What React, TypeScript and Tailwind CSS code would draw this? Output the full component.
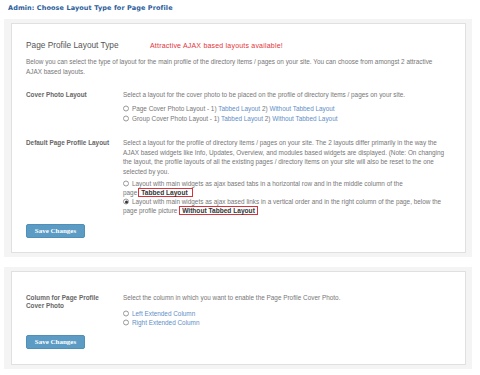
import React from "react";

const body = "font-['Liberation_Sans',Arial,sans-serif]";

function Radio({ checked }: { checked?: boolean }) {
  return (
    <span className="inline-flex align-middle w-[6px] h-[6px] rounded-full border border-[#9a9a9a] bg-white items-center justify-center mr-[3px] shrink-0 -translate-y-[0.5px]">
      {checked ? <span className="w-[3px] h-[3px] rounded-full bg-[#333]" /> : null}
    </span>
  );
}

function Button() {
  return (
    <div className="w-[59px] h-[14px] rounded-[2px] bg-[#5b9bc4] border border-[#4f8fb8] flex items-center justify-center text-white text-[7px] font-bold font-['Liberation_Serif',serif]">
      Save Changes
    </div>
  );
}

const link = "text-[#5f8fc7]";

export default function App() {
  return (
    <div className={`w-[480px] h-[375px] bg-white ${body} text-[#777] text-[6.4px] leading-[10px] pt-[4px] overflow-hidden`}>
      <div className="pl-[8px] text-[#2b5d9b] font-bold text-[6.5px] leading-[9px] font-['DejaVu_Sans',sans-serif] tracking-[0.1px]">
        Admin: Choose Layout Type for Page Profile
      </div>

      <div className="mt-[6px] ml-[4px] w-[468px] bg-[#f4f4f4] pt-[4px] pl-[7px] pr-[6px] pb-[4px]">
        <div className="bg-white border border-[#e0e0e0] pl-[14px] pr-[17px] pt-[15px] pb-[14px]">
          <div className="flex items-baseline">
            <div className="text-[#555] text-[8.3px] leading-[12px] w-[124px]">Page Profile Layout Type</div>
            <div className="text-[#e3343b] text-[7px] tracking-[0.2px]">Attractive AJAX based layouts available!</div>
          </div>
          <div className="mt-[6px] pr-[8px]">
            Below you can select the type of layout for the main profile of the directory items / pages on your site. You can choose from amongst 2 attractive AJAX based layouts.
          </div>

          <div className="mt-[13px] flex">
            <div className="w-[97px] shrink-0 font-bold text-[#666]">Cover Photo Layout</div>
            <div className="flex-1">
              <div>Select a layout for the cover photo to be placed on the profile of directory items / pages on your site.</div>
              <div className="mt-[4px]">
                <Radio />
                Page Cover Photo Layout - 1) <span className={link}>Tabbed Layout</span> 2) <span className={link}>Without Tabbed Layout</span>
              </div>
              <div>
                <Radio />
                Group Cover Photo Layout - 1) <span className={link}>Tabbed Layout</span> 2) <span className={link}>Without Tabbed Layout</span>
              </div>
            </div>
          </div>

          <div className="mt-[14px] flex">
            <div className="w-[97px] shrink-0 font-bold text-[#666] leading-[9.5px]">Default Page Profile Layout</div>
            <div className="flex-1">
              <div className="leading-[9.5px]">
                Select a layout for the profile of directory items / pages on your site. The 2 layouts differ primarily in the way the AJAX based widgets like Info, Updates, Overview, and modules based widgets are displayed. (Note: On changing the layout, the profile layouts of all the existing pages / directory items on your site will also be reset to the one selected by you.
              </div>
              <div className="mt-[4px] leading-[8.5px]">
                <Radio />
                Layout with main widgets as ajax based tabs in a horizontal row and in the middle column of the{" "}
                <span className="whitespace-nowrap">
                  page
                  <span className="ml-[1px] border border-[#d9323a] pl-[2px] pr-[4px] text-[#333] font-bold text-[6.6px]">Tabbed Layout</span>
                </span>
              </div>
              <div className="mt-[1px] leading-[8.5px]">
                <Radio checked />
                Layout with main widgets as ajax based links in a vertical order and in the right column of the page, below the page profile picture{" "}
                <span className="border border-[#d9323a] px-[2px] text-[#333] font-bold text-[6.6px]">Without Tabbed Layout</span>
              </div>
            </div>
          </div>

          <div className="mt-[9px]">
            <Button />
          </div>
        </div>
      </div>

      <div className="mt-[10px] ml-[4px] w-[468px] bg-[#f4f4f4] pt-[4px] pl-[7px] pr-[6px] pb-[4px]">
        <div className="bg-white border border-[#e0e0e0] pl-[14px] pr-[17px] pt-[22px] pb-[15px]">
          <div className="flex">
            <div className="w-[97px] shrink-0 font-bold text-[#666] leading-[8px]">Column for Page Profile<br />Cover Photo</div>
            <div className="flex-1">
              <div className="leading-[8px]">Select the column in which you want to enable the Page Profile Cover Photo.</div>
              <div className="mt-[7px] leading-[9px] text-[#5f8fc7]">
                <Radio />
                Left Extended Column
              </div>
              <div className="leading-[9px] text-[#5f8fc7]">
                <Radio />
                Right Extended Column
              </div>
            </div>
          </div>
          <div className="mt-[8px]">
            <Button />
          </div>
        </div>
      </div>
    </div>
  );
}
